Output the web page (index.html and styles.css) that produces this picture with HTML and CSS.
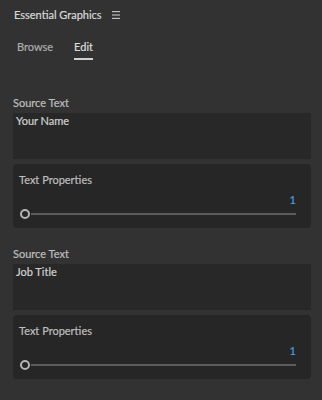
FILE: index.html
```html
<!DOCTYPE html>
<html lang="en">
<head>
  <meta charset="UTF-8">
  <title>Essential Graphics</title>
  <link rel="stylesheet" href="styles.css">
</head>
<body>
  <div class="panel">
    <div class="header">
      <span class="title">Essential Graphics</span>
      <svg class="menu" width="8" height="8" viewBox="0 0 8 8">
        <rect x="0" y="0" width="8" height="1.2" fill="#bdbdbd"/>
        <rect x="0" y="3.4" width="8" height="1.2" fill="#bdbdbd"/>
        <rect x="0" y="6.8" width="8" height="1.2" fill="#bdbdbd"/>
      </svg>
    </div>
    <div class="tabs">
      <span class="tab">Browse</span>
      <span class="tab active">Edit</span>
    </div>

    <div class="section">
      <div class="label">Source Text</div>
      <div class="text-box">Your Name</div>
      <div class="props">
        <div class="props-title">Text Properties</div>
        <div class="value">1</div>
        <div class="slider">
          <span class="knob"></span>
          <span class="track"></span>
        </div>
      </div>
    </div>

    <div class="section">
      <div class="label">Source Text</div>
      <div class="text-box">Job Title</div>
      <div class="props">
        <div class="props-title">Text Properties</div>
        <div class="value">1</div>
        <div class="slider">
          <span class="knob"></span>
          <span class="track"></span>
        </div>
      </div>
    </div>
  </div>
</body>
</html>
```

FILE: styles.css
```css
body {
  margin: 0;
  background: #323232;
  font-family: Lato, "Open Sans", sans-serif;
  font-size: 11px;
  color: #bbb;
  -webkit-text-stroke: 0.2px;
}
.panel {
  width: 322px;
  height: 400px;
  box-sizing: border-box;
  padding: 0 11px 0 13px;
}
.header {
  display: flex;
  align-items: center;
  gap: 10px;
  height: 28px;
  padding-left: 1px;
}
.title {
  font-size: 11px;
  color: #d8d8d8;
}
.menu {
  margin-top: 1px;
}
.tabs {
  display: flex;
  gap: 21px;
  padding: 9px 0 0 4px;
  height: 30px;
}
.tab {
  color: #adadad;
  font-size: 11px;
  height: 21px;
  line-height: 20px;
}
.tab.active {
  color: #dcdcdc;
  border-bottom: 2px solid #d0d0d0;
}
.section {
  margin-top: 28px;
}
.section + .section {
  margin-top: 18px;
}
.label {
  color: #bebebe;
  line-height: 16px;
  height: 16px;
  margin-bottom: 2px;
}
.text-box {
  background: #282828;
  height: 46px;
  box-sizing: border-box;
  padding: 0 3px;
  color: #d0d0d0;
  line-height: 16px;
}
.props {
  margin-top: 5px;
  background: #262626;
  border-radius: 4px;
  height: 64px;
  box-sizing: border-box;
  padding: 8px 15px 0 6px;
}
.props-title {
  color: #bebebe;
  line-height: 16px;
}
.value {
  text-align: right;
  color: #4a9ee0;
  font-size: 11px;
  line-height: 14px;
  margin-top: 5px;
}
.slider {
  display: flex;
  align-items: center;
  margin-top: 2px;
}
.knob {
  width: 6px;
  height: 6px;
  border: 2px solid #b4b4b4;
  border-radius: 50%;
  flex: none;
  margin-left: 1px;
}
.track {
  flex: 1;
  height: 2px;
  background: #5c5c5c;
  margin-left: 1px;
}
```
